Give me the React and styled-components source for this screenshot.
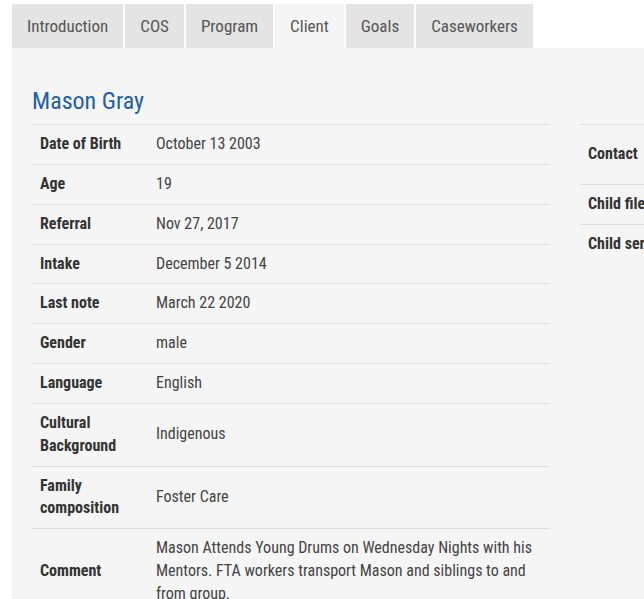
import styled, { createGlobalStyle } from 'styled-components';

const GlobalStyle = createGlobalStyle`
    * { box-sizing: border-box; }
    html, body {
        margin: 0;
        background: #ffffff;
        overflow: hidden;
    }
    body {
        font-family: "Roboto", "Liberation Sans Narrow", "DejaVu Sans Condensed", sans-serif;
        font-stretch: condensed;
        color: #333333;
    }
`

const Page = styled.div`
    padding: 4px 0 0 12px;
    width: 1200px;
`

const TabBar = styled.nav`
    display: flex;
    gap: 2px;
`

const Tab = styled.div`
    padding: 10px 15px;
    font-size: 17px;
    line-height: 24px;
    color: #555555;
    background-color: ${props => props.$active ? '#f5f5f5' : '#e4e4e4'};
`

const Panel = styled.section`
    background-color: #f5f5f5;
    padding: 40px 20px 0 20px;
    min-height: 560px;
`

const Heading = styled.h2`
    margin: 0 0 10px 0;
    font-size: 24px;
    line-height: 26px;
    font-weight: 400;
    color: #2160a6;
`

const Columns = styled.div`
    display: grid;
    grid-template-columns: 517px 517px;
    column-gap: 31px;
    align-items: start;
`

const InfoTable = styled.table`
    width: 100%;
    border-collapse: collapse;
    table-layout: fixed;
    font-size: 16px;
    line-height: 1.42857;
`

const Row = styled.tr`
    border-top: 1px solid #dddddd;
    height: ${props => props.$tall ? '60px' : 'auto'};
`

const Label = styled.th`
    width: 116px;
    padding: 8px;
    text-align: left;
    vertical-align: middle;
    font-weight: 700;
    color: #333333;
`

const Value = styled.td`
    padding: 8px;
    vertical-align: middle;
    color: #444444;
`

const clientRows = [
    ['Date of Birth', 'October 13 2003'],
    ['Age', '19'],
    ['Referral', 'Nov 27, 2017'],
    ['Intake', 'December 5 2014'],
    ['Last note', 'March 22 2020'],
    ['Gender', 'male'],
    ['Language', 'English'],
    ['Cultural Background', 'Indigenous'],
    ['Family composition', 'Foster Care'],
    ['Comment', 'Mason Attends Young Drums on Wednesday Nights with his Mentors. FTA workers transport Mason and siblings to and from group.'],
];

const contactRows = [
    ['Contact', 'Phone and email on file', true],
    ['Child files', 'Open'],
    ['Child services', 'Active'],
];

const tabs = ['Introduction', 'COS', 'Program', 'Client', 'Goals', 'Caseworkers'];

function App() {
    return (
        <>
            <GlobalStyle />
            <Page>
                <TabBar>
                    {tabs.map(t => (
                        <Tab key={t} $active={t === 'Client'}>{t}</Tab>
                    ))}
                </TabBar>
                <Panel>
                    <Heading>Mason Gray</Heading>
                    <Columns>
                        <InfoTable>
                            <tbody>
                                {clientRows.map(([label, value]) => (
                                    <Row key={label}>
                                        <Label>{label}</Label>
                                        <Value>{value}</Value>
                                    </Row>
                                ))}
                            </tbody>
                        </InfoTable>
                        <InfoTable>
                            <tbody>
                                {contactRows.map(([label, value, tall]) => (
                                    <Row key={label} $tall={tall}>
                                        <Label>{label}</Label>
                                        <Value>{value}</Value>
                                    </Row>
                                ))}
                            </tbody>
                        </InfoTable>
                    </Columns>
                </Panel>
            </Page>
        </>
    );
}

export default App;
